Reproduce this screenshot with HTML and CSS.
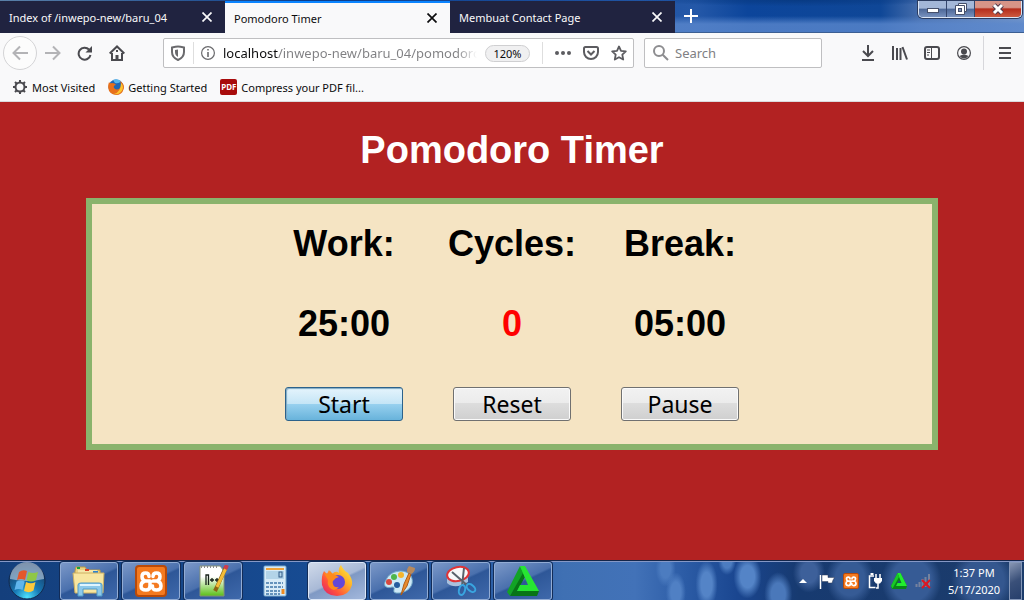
FILE: index.html
```html
<!DOCTYPE html>
<html lang="en">

<head>
    <meta charset="UTF-8">
    <meta name="viewport" content="width=device-width, initial-scale=1.0">
    <title>Pomodoro Timer</title>
    <link rel="stylesheet" href="styles.css">
</head>

<body>
    <svg class="defs" aria-hidden="true">
        <symbol id="xampp" viewBox="0 0 32 32">
            <rect x="1" y="1" width="30" height="30" rx="3" fill="#f47a20" stroke="#b94a08" stroke-width="2"/>
            <path d="M15 16V21Q15 25 11 25Q6 25 6 21Q6 17 10 16Q7 15 7 11.500Q7 8 10.500 8Q14 8 14 11.500M18 11.500Q18 8 21.500 8Q25 8 25 11.500Q25 15 22 16Q26 17 26 21Q26 25 21.500 25Q17 25 17.500 21M10 16H15M18 16H22" fill="none" stroke="#fff" stroke-width="3.500" stroke-linecap="round" stroke-linejoin="round"/>
        </symbol>
        <symbol id="triangle" viewBox="0 0 32 32">
            <path d="M13 1L0 27L3 31L17 9Z" fill="#12a325"/>
            <path d="M3 31H30L32 26H10L18 12L16 8Z" fill="#087416"/>
            <path d="M13 1H18L32 26H10L13 20H21Z" fill="#27e532"/>
        </symbol>
        <symbol id="traytriangle" viewBox="0 0 16 16">
            <path d="M6.500 0H9.500L16 13L15 16H1L0 13Z" fill="#0a8519"/>
            <path d="M6.500 0H9.500L16 13H5L6.500 10H10.500Z" fill="#22ee2e"/>
            <path d="M6.500 0L0 13L1.500 15.500L8 4Z" fill="#18ca27"/>
            <path d="M8 7L9.700 10H6.500Z" fill="#244a80"/>
        </symbol>
        <symbol id="close" viewBox="0 0 10 10">
            <path d="M.5.5L9.500 9.500M9.500.5L.5 9.500" fill="none" stroke="currentColor" stroke-width="1.700"/>
        </symbol>
    </svg>

    <header class="browser">
        <div class="tabs">
            <div class="tab">
                <a href="#">Index of /inwepo-new/baru_04</a>
                <button aria-label="Close tab"><svg width="10" height="10"><use href="#close"/></svg></button>
            </div>
            <div class="tab active">
                <a href="#">Pomodoro Timer</a>
                <button aria-label="Close tab"><svg width="10" height="10"><use href="#close"/></svg></button>
            </div>
            <div class="tab">
                <a href="#">Membuat Contact Page</a>
                <button aria-label="Close tab"><svg width="10" height="10"><use href="#close"/></svg></button>
            </div>
            <button class="newtab" aria-label="New tab">
                <svg width="14" height="14" viewBox="0 0 14 14"><path d="M7 0V14M0 7H14" stroke="#fff" stroke-width="2"/></svg>
            </button>
            <div class="winbtns">
                <button aria-label="Minimize"><svg width="12" height="12" viewBox="0 0 12 12"><rect x=".5" y="5.500" width="11" height="4" fill="#fff" stroke="#46506b"/></svg></button>
                <button aria-label="Restore"><svg width="12" height="12" viewBox="0 0 12 12"><path d="M3.500.5H11.500V8.500H3.500Z" fill="#fff" stroke="#46506b"/><path d="M.5 2.500H9.500V11.500H.5Z" fill="#fff" stroke="#46506b"/><rect x="3.500" y="5.500" width="3" height="3" fill="#7f93bb" stroke="#46506b"/></svg></button>
                <button class="winclose" aria-label="Close"><svg width="12" height="12" viewBox="0 0 12 12"><path d="M2 2L10 10M10 2L2 10" stroke="#50394a" stroke-width="5"/><path d="M2 2L10 10M10 2L2 10" stroke="#fff" stroke-width="3"/></svg></button>
            </div>
        </div>

        <div class="toolbar">
            <button class="icon back" aria-label="Back"><svg width="16" height="16" viewBox="0 0 16 16"><path d="M16 8H1M8 1.500L1.500 8L8 14.500"/></svg></button>
            <button class="icon forward" aria-label="Forward"><svg width="16" height="16" viewBox="0 0 16 16"><path d="M0 8H15M8 1.500L14.500 8L8 14.500"/></svg></button>
            <button class="icon" aria-label="Reload"><svg width="16" height="16" viewBox="0 0 16 16"><path d="M12 4.500A6 6 0 1 0 13.500 10"/><path d="M15 1V7.500H8.500Z" fill="#4a4a4f" stroke="none"/></svg></button>
            <button class="icon" aria-label="Home"><svg width="16" height="16" viewBox="0 0 16 16"><path d="M.7 8.500L8 1.500L15.300 8.500M3 8V15H13V8"/><path d="M6.500 15V10H9.500V15Z" fill="#4a4a4f" stroke="none"/><path d="M8 5V7"/></svg></button>

            <div class="urlbar">
                <svg class="shield" width="14" height="16" viewBox="0 0 14 16"><path d="M7 1.500C9 1.500 11 2 13 2.500V7C13 11 10.500 13.500 7 15C3.500 13.500 1 11 1 7V2.500C3 2 5 1.500 7 1.500Z" fill="none" stroke="#6a6a6d" stroke-width="2"/><path d="M7 4.500V12C5 11 4 9 4 7V5Z" fill="#6a6a6d"/></svg>
                <i class="sep"></i>
                <svg class="info" width="14" height="14" viewBox="0 0 14 14"><circle cx="7" cy="7" r="6.400" fill="none" stroke="#6a6a6d" stroke-width="1.200"/><path d="M7 6V11M7 3V4.600" stroke="#6a6a6d" stroke-width="1.600"/></svg>
                <input class="address" type="text" aria-label="Address" value="localhost/inwepo-new/baru_04/pomodoro">
                <button class="zoom">120%</button>
                <i class="sep"></i>
                <button aria-label="Page actions"><svg width="16" height="4" viewBox="0 0 16 4"><g fill="#5c5c60"><circle cx="2" cy="2" r="2"/><circle cx="8" cy="2" r="2"/><circle cx="14" cy="2" r="2"/></g></svg></button>
                <button aria-label="Save to Pocket"><svg width="16" height="14" viewBox="0 0 16 14"><path d="M2.500 1H13.500Q15 1 15 2.500V6A7 7 0 0 1 1 6V2.500Q1 1 2.500 1Z" fill="none" stroke="#5c5c60" stroke-width="2"/><path d="M4.500 5L8 8.500L11.500 5" fill="none" stroke="#5c5c60" stroke-width="2"/></svg></button>
                <button aria-label="Bookmark this page"><svg width="16" height="16" viewBox="0 0 16 16"><path d="M8 1.500L10 5.800L14.800 6.400L11.300 9.700L12.200 14.500L8 12.200L3.800 14.500L4.700 9.700L1.200 6.400L6 5.800Z" fill="none" stroke="#5c5c60" stroke-width="1.800" stroke-linejoin="round"/></svg></button>
            </div>

            <div class="searchbar">
                <svg width="16" height="16" viewBox="0 0 16 16"><circle cx="6" cy="6" r="5" fill="none" stroke="#8d8d90" stroke-width="2"/><path d="M9.700 9.700L15 15" stroke="#8d8d90" stroke-width="2"/></svg>
                <input type="text" placeholder="Search" aria-label="Search">
            </div>

            <div class="tools">
                <button class="icon" aria-label="Downloads"><svg width="14" height="16" viewBox="0 0 14 16"><path d="M7 0V11M2 6L7 11L12 6M1 15H13"/></svg></button>
                <button class="icon" aria-label="Library"><svg width="16" height="16" viewBox="0 0 16 16"><path d="M1 1V15M5 3V15M8.500 3V15M10.500 2L15 14.500"/></svg></button>
                <button class="icon" aria-label="Sidebars"><svg width="16" height="14" viewBox="0 0 16 14"><rect x="1" y="1" width="14" height="12" rx="2"/><path d="M7.500 1V13" stroke-width="1"/><path d="M3 4H6M3 6.500H6M3 9H5" stroke-width="1"/></svg></button>
                <button class="icon" aria-label="Account"><svg width="14" height="14" viewBox="0 0 14 14"><circle cx="7" cy="7" r="6.400" stroke-width="1.200"/><circle cx="7" cy="5.500" r="3" fill="#4a4a4f" stroke="none"/><path d="M2.500 10Q7 7 11.500 10Q7 15 2.500 10Z" fill="#4a4a4f" stroke="none"/></svg></button>
            </div>
            <button class="icon menu" aria-label="Menu"><svg width="12" height="12" viewBox="0 0 12 12"><path d="M0 1H12M0 6H12M0 11H12"/></svg></button>
        </div>

        <nav class="bookmarks">
            <a href="#">
                <svg width="16" height="16" viewBox="0 0 16 16"><circle cx="8" cy="8" r="4.500" fill="none" stroke="#4a4a4f" stroke-width="2"/><path d="M8 1V3.500M8 12.500V15M1 8H3.500M12.500 8H15M3 3L4.800 4.800M11.200 11.200L13 13M13 3L11.200 4.800M4.800 11.200L3 13" stroke="#4a4a4f" stroke-width="2"/></svg>
                Most Visited
            </a>
            <a href="#">
                <svg width="16" height="16" viewBox="0 0 16 16"><circle cx="8" cy="8" r="7.500" fill="#1e67b5"/><path d="M5 1Q9-1 13 2Q11 5 7 4Z" fill="#58b7ec"/><path d="M1 3Q2 5 4 4Q7 4 8 6Q5 6 6 9Q9 12 12 9Q14 6 12 2Q17 5 15.700 10Q14 16 8 16Q1 15 .2 9Q0 6 1 3Z" fill="#e8701a"/><path d="M13 4Q17 8 13 13Q10 16 6 15Q13 13 13 4Z" fill="#fcc52e"/></svg>
                Getting Started
            </a>
            <a href="#">
                <span class="pdf">PDF</span>
                Compress your PDF fil...
            </a>
        </nav>
    </header>

    <main class="page">
        <h1>Pomodoro Timer</h1>
        <div class="box">
            <div class="timer">
                <div class="cell">Work:</div>
                <div class="cell">Cycles:</div>
                <div class="cell">Break:</div>
                <div class="cell">25:00</div>
                <div class="cell cycles">0</div>
                <div class="cell">05:00</div>
                <div class="cell"><button class="btn start">Start</button></div>
                <div class="cell"><button class="btn">Reset</button></div>
                <div class="cell"><button class="btn">Pause</button></div>
            </div>
        </div>
    </main>

    <footer class="taskbar">
        <button class="orb" aria-label="Start menu">
            <svg width="38" height="38" viewBox="0 0 38 38">
                <defs>
                    <radialGradient id="orbfill" cx=".5" cy=".95" r=".9"><stop offset="0" stop-color="#4fe3ff"/><stop offset=".4" stop-color="#1779b5"/><stop offset="1" stop-color="#18355f"/></radialGradient>
                </defs>
                <circle cx="19" cy="19" r="18" fill="url(#orbfill)" stroke="#12294d"/>
                <path d="M2 17A17 17 0 0 1 36 17Q19 21 2 17Z" fill="#c4d6e6" opacity=".6"/>
                <path d="M11 10Q15 7 19 9L17 18Q13 16 9 18Z" fill="#e4572b"/>
                <path d="M20.500 10Q25 12 30 10L28 18Q23 21 18.500 18Z" fill="#8fc747"/>
                <path d="M8.500 19.500Q13 17.500 16.700 19.500L14.500 28Q11 26 6.500 28Z" fill="#5fb5ed"/>
                <path d="M18 20Q23 22.500 27.500 20L25.500 28.500Q21 31.500 16 29Z" fill="#fcc93c"/>
            </svg>
        </button>
        <button class="task" aria-label="Explorer">
            <svg width="34" height="32" viewBox="0 0 34 32">
                <path d="M3 6L4 2H13L15 5H28L29 25H3Z" fill="#ead281" stroke="#b99a49"/>
                <path d="M6 5H25L28 10V26H6Z" fill="#f5e6a8"/>
                <path d="M5 3H8" stroke="#18a33a" stroke-width="2"/><path d="M13 5H17" stroke="#d84026" stroke-width="2"/><path d="M21 7H26" stroke="#2a83d2" stroke-width="2"/>
                <path d="M1 8H32L31 28H3Z" fill="#f7e5a0" stroke="#cdb062"/>
                <path d="M6 31V20Q6 18 9 18H27Q30 18 30 20V31H25V24H11V31Z" fill="#8dc9ea" stroke="#4e9ac9"/>
                <path d="M8 20H28" stroke="#dff5ff" stroke-width="2"/>
            </svg>
        </button>
        <button class="task" aria-label="XAMPP"><svg width="32" height="32"><use href="#xampp"/></svg></button>
        <button class="task" aria-label="Notepad++">
            <svg width="32" height="32" viewBox="0 0 32 32">
                <defs><linearGradient id="note" x2="0" y2="1"><stop offset=".35" stop-color="#fff"/><stop offset="1" stop-color="#5abf16"/></linearGradient></defs>
                <path d="M3 1H23L27 6V31H3Z" fill="url(#note)" stroke="#879277"/>
                <path d="M4 2H22" stroke="#8a8a8a" stroke-width="2" stroke-dasharray="1 2"/>
                <path d="M9 20V10H11.500V20M13 15H17M15 13V17M18 15H22M20 13V17" fill="none" stroke="#17211a" stroke-width="1.300"/>
                <path d="M29 2L20 22L18 26" stroke="#8c6514" stroke-width="4"/><path d="M29 3L20 22" stroke="#f4bd38" stroke-width="3"/><path d="M28 4L30 0" stroke="#ce3c4d" stroke-width="4"/>
            </svg>
        </button>
        <button class="task plain" aria-label="Calculator">
            <svg width="24" height="32" viewBox="0 0 24 32">
                <rect x="1" y="1" width="22" height="30" rx="1" fill="#d8ebf7" stroke="#79a9ce"/>
                <path d="M3 4H21" stroke="#f0a239" stroke-width="2"/><rect x="3" y="6" width="18" height="8" fill="#b3d4e8"/>
                <rect x="16" y="7" width="3" height="5" fill="none" stroke="#315b87"/>
                <path d="M3 18H20M3 22H20M3 26H17M3 29H17" stroke="#6593bc" stroke-width="2" stroke-dasharray="3 1"/><path d="M20 24V29" stroke="#ee8b21" stroke-width="3"/>
            </svg>
        </button>
        <button class="task current" aria-label="Firefox">
            <svg width="32" height="32" viewBox="0 0 32 32">
                <defs><linearGradient id="fox" x1="1" y1="0" x2="0" y2="1"><stop offset="0" stop-color="#fff44f"/><stop offset=".35" stop-color="#ffb327"/><stop offset=".7" stop-color="#ff4f3c"/><stop offset="1" stop-color="#d51b77"/></linearGradient></defs>
                <path d="M18 8Q17 3 20 0Q22 5 27 8Q32 14 31 20Q28 31 16 31Q4 31 1 20Q0 11 3 6L6 9L8 5L11 9Q15 5 18 8Z" fill="url(#fox)"/>
                <circle cx="17" cy="17" r="7" fill="#6547d8"/>
                <path d="M3 8L8 9L9 6L12 9L18 12Q14 13 13 15Q11 16 12 19Q13 23 18 22Q13 28 8 22Q6 19 7 15Z" fill="#ff8a1c"/>
            </svg>
        </button>
        <button class="task" aria-label="Paint">
            <svg width="34" height="32" viewBox="0 0 34 32">
                <path d="M4 15C8 5 24 3 29 11C34 21 24 29 14 28C9 27 15 22 10 22C5 24 0 21 4 15Z" fill="#cce8f6" stroke="#72a8c7"/>
                <circle cx="7" cy="17" r="3" fill="#d8493e"/><circle cx="12" cy="12" r="3" fill="#4eb64b"/><circle cx="19" cy="10" r="3" fill="#f4b52d"/><circle cx="15" cy="20" r="3" fill="#245b9e"/>
                <path d="M19 30L22 19L27 8L29 9L25 21Z" fill="#e88b2c" stroke="#af5c17"/><path d="M25 7Q25 3 27 1L33 3Q33 7 29 9Z" fill="#b8895c"/>
            </svg>
        </button>
        <button class="task" aria-label="Snipping Tool">
            <svg width="34" height="32" viewBox="0 0 34 32">
                <path d="M3 10V18Q11 25 24 17V9Z" fill="#a9c1dd"/>
                <ellipse cx="14" cy="9" rx="11" ry="7" fill="#f7f8fa" stroke="#df3437" stroke-width="2" transform="rotate(-12 14 9)"/>
                <path d="M8 7L24 21M20 3L18 21" stroke="#59626c" stroke-width="2"/>
                <ellipse cx="18" cy="25" rx="3" ry="5" fill="none" stroke="#39a5e0" stroke-width="2" transform="rotate(15 18 25)"/><ellipse cx="27" cy="23" rx="5" ry="3" fill="none" stroke="#39a5e0" stroke-width="2" transform="rotate(40 27 23)"/>
            </svg>
        </button>
        <button class="task" aria-label="Triangle"><svg width="32" height="32"><use href="#triangle"/></svg></button>

        <div class="tray">
            <button aria-label="Show hidden icons"><svg width="8" height="4" viewBox="0 0 8 4"><path d="M0 4L4 0L8 4Z" fill="#fff"/></svg></button>
            <button aria-label="Action Center"><svg width="16" height="16" viewBox="0 0 16 16"><path d="M1.500 2V16" stroke="#fff" stroke-width="1.500"/><path d="M3 2H9V4.500H15.500L14 7L13 10H9V8.500H3Z" fill="#fff" stroke="#333e58" stroke-width=".5"/></svg></button>
            <button aria-label="XAMPP"><svg width="16" height="16"><use href="#xampp"/></svg></button>
            <button aria-label="Power"><svg width="16" height="16" viewBox="0 0 16 16"><path d="M7 3H2.500V14.500H8.500" fill="none" stroke="#fff" stroke-width="1.500"/><path d="M3.500 1H6.500" stroke="#fff" stroke-width="2"/><path d="M9 1V5M13 1V5M11 10V15H9" fill="none" stroke="#fff" stroke-width="1.500"/><path d="M7 5H15V8L13 10.500H9L7 8Z" fill="#fff"/></svg></button>
            <button aria-label="Triangle"><svg width="16" height="16"><use href="#traytriangle"/></svg></button>
            <button aria-label="Network"><svg width="16" height="16" viewBox="0 0 16 16"><path d="M1.500 11V14M4.500 9V14M7.500 6V14M10.500 4V14M14 1V14" stroke="#76839e" stroke-width="2"/><path d="M7 7L15 15M15 7L7 15" stroke="#e11520" stroke-width="2"/></svg></button>
        </div>
        <div class="clock">
            <span>1:37 PM</span>
            <span>5/17/2020</span>
        </div>
        <button class="desktop" aria-label="Show desktop"></button>
    </footer>
</body>

</html>
```

FILE: styles.css
```css
* {
    margin: 0;
    padding: 0;
    box-sizing: border-box;
}

body {
    display: flex;
    flex-direction: column;
    min-height: 100vh;
    font: 11px "Noto Sans", "Open Sans", sans-serif;
    color: #0c0c0d;
}

a {
    color: inherit;
    text-decoration: none;
}

button {
    display: flex;
    align-items: center;
    justify-content: center;
    border: none;
    background: none;
    font: inherit;
    color: inherit;
}

input {
    min-width: 0;
    border: none;
    outline: none;
    background: none;
    font: inherit;
}

svg {
    display: block;
    flex: none;
}

.defs {
    position: absolute;
    width: 0;
    height: 0;
}

/* tabs */
.tabs {
    display: flex;
    height: 33px;
    padding-top: 1px;
    background:
        linear-gradient(to bottom, rgba(90, 135, 205, 0) 50%, rgba(90, 135, 205, .8) 75%),
        radial-gradient(ellipse at 78% 0, #083a83 0, rgba(8, 58, 131, 0) 14%),
        linear-gradient(to right, #5a80a8, #0b3d8a 30%, #2458a8 68%, #0c459b 73%, #0f4797 86%, #4a70ad 90%, #7898c8);
    border-bottom: 1px solid #3c5f93;
}

.tab {
    display: flex;
    flex: 0 1 225px;
    align-items: center;
    justify-content: space-between;
    height: 32px;
    padding: 0 13px 0 9px;
    background: #202340;
    color: #f9f9fa;
    white-space: nowrap;
}

.tab.active {
    border-top: 2px solid #0a84ff;
    background: #f9f9fa;
    color: #0c0c0d;
}

.newtab {
    width: 32px;
    height: 30px;
}

.winbtns {
    display: flex;
    height: 17px;
    margin-left: auto;
    margin-right: 2px;
    border: 1px solid #dce6f5;
    border-top: none;
    border-radius: 0 0 5px 5px;
    box-shadow: 0 0 0 1px #2b3c60;
    overflow: hidden;
}

.winbtns button {
    width: 28px;
    border-right: 1px solid #34466d;
    background: linear-gradient(#a3b7d8 45%, #4c6797 50%, #7892bf);
}

.winbtns .winclose {
    width: 46px;
    border-right: none;
    background: linear-gradient(#d79487 40%, #b52d1c 50%, #cc5a40);
}

/* toolbar */
.toolbar {
    display: flex;
    align-items: center;
    height: 40px;
    padding: 0 3px;
    background: #f9f9fa;
}

.icon {
    width: 32px;
    height: 34px;
    fill: none;
    stroke: #4a4a4f;
    stroke-width: 2;
}

.back {
    width: 34px;
    border: 1px solid #d4d4d6;
    border-radius: 50%;
    background: #fcfcfc;
}

.back,
.forward {
    stroke: #b3b3b6;
}

.urlbar,
.searchbar {
    display: flex;
    align-items: center;
    height: 30px;
    border: 1px solid #bfbfc1;
    border-radius: 2px;
    background: #fff;
    font-size: 13px;
}

.urlbar {
    flex: 1;
    margin-left: 30px;
    padding-left: 7px;
}

.sep {
    width: 1px;
    height: 22px;
    background: #dedede;
}

.shield,
.info {
    margin-right: 8px;
}

.info {
    margin-left: 7px;
}

.address {
    flex: 1;
    height: 28px;
    background: linear-gradient(to right, #0c0c0d 55px, #7f7f82 55px, #7f7f82 calc(100% - 24px), transparent calc(100% - 4px));
    -webkit-background-clip: text;
    background-clip: text;
    color: transparent;
}

.urlbar button {
    width: 28px;
    height: 28px;
}

.urlbar .sep + button {
    margin-left: 6px;
}

.urlbar .zoom {
    width: 45px;
    height: 17px;
    margin: 0 12px 0 4px;
    border: 1px solid #cfcfd1;
    border-radius: 9px;
    background: #f0f0f1;
    font-size: 11px;
}

.searchbar {
    width: 178px;
    margin-left: 10px;
    padding: 0 8px;
    gap: 6px;
}

.searchbar input {
    flex: 1;
}

.searchbar input::placeholder {
    color: #808083;
}

.tools {
    display: flex;
    margin-left: 30px;
    padding-right: 3px;
    border-right: 1px solid #d7d7db;
}

.menu {
    margin-left: 5px;
}

.bookmarks {
    display: flex;
    align-items: center;
    gap: 13px;
    height: 29px;
    padding: 0 12px;
    border-bottom: 1px solid #dadadc;
    background: #f9f9fa;
}

.bookmarks a {
    display: flex;
    align-items: center;
    gap: 4px;
}

.pdf {
    width: 17px;
    height: 16px;
    border-radius: 2px;
    background: #a80c0c;
    color: #fff;
    font-size: 8px;
    font-weight: bold;
    line-height: 16px;
    text-align: center;
}

/* timer page */
.page {
    flex: 1;
    background: #b22222;
    font-family: "Liberation Sans", Arial, sans-serif;
}

.page h1 {
    color: #fff;
    font-size: 38px;
    line-height: 96px;
    text-align: center;
}

.box {
    margin: 0 86px;
    border: 6px solid #8ab36c;
    background: #f5e4c3;
}

.timer {
    display: grid;
    grid-template-columns: repeat(3, 1fr);
    width: 60%;
    margin: 0 auto;
}

.cell {
    display: flex;
    align-items: center;
    justify-content: center;
    height: 80px;
    color: #000;
    font-size: 36px;
    font-weight: bold;
}

.cycles {
    color: #f00;
}

.btn {
    width: 70%;
    height: 34px;
    border: 1px solid #707070;
    border-radius: 3px;
    background: linear-gradient(#f2f2f2, #ebebeb 48%, #dddddd 48%, #cfcfcf);
    box-shadow: inset 0 0 0 1px #fafafa;
    color: #000;
    font: 23px "Noto Sans", Tahoma, sans-serif;
}

.btn.start {
    border-color: #2c628b;
    background: linear-gradient(#e5f4fc, #c4e5f6 50%, #98d1ef 50%, #68b3db);
    box-shadow: inset 1px 1px 1px #7fa9c2;
}

/* taskbar */
.taskbar {
    display: flex;
    align-items: center;
    gap: 4px;
    height: 40px;
    padding-right: 2px;
    border-top: 1px solid #14264a;
    box-shadow: inset 0 1px #8598c6;
    background:
        radial-gradient(ellipse 14px 22px at 73% 40%, #5484c7 50%, transparent),
        radial-gradient(ellipse 11px 24px at 69% 60%, #5484c7 50%, transparent),
        radial-gradient(ellipse 10px 20px at 66% 80%, #5080c4 50%, transparent),
        radial-gradient(ellipse 10px 18px at 65% 20%, #4c7cc0 50%, transparent),
        radial-gradient(ellipse 9px 14px at 71% 0, #4c7cc0 50%, transparent),
        radial-gradient(ellipse 14px 22px at 76% 85%, #4a78ba 50%, transparent),
        radial-gradient(ellipse 16px 20px at 79% 30%, #3d609a 50%, transparent),
        radial-gradient(ellipse 24px 28px at 83% 45%, #365b95 60%, transparent),
        radial-gradient(ellipse 30px 32px at 89% 50%, #365b95 65%, transparent),
        radial-gradient(ellipse 32px 32px at 96% 50%, #34578f 65%, transparent),
        linear-gradient(to right, #143f7c, #174b92 30%, #2f62aa 50%, #3f70b3 55%, #4272b8 62%, #2b5ba5 67%, #1a4690 72%, #173a70 78%, #1c3c6b);
}

.orb {
    width: 54px;
    margin-right: 2px;
}

.task {
    width: 58px;
    height: 38px;
    border: 1px solid #92acd4;
    border-radius: 3px;
    background: linear-gradient(155deg, #7b98c8, #4a70ad 48%, #2e5798 52%, #3f69ab);
    box-shadow: 0 0 0 1px #122c58;
}

.task.plain {
    border-color: transparent;
    background: none;
    box-shadow: none;
}

.task.current {
    border-color: #dce7f7;
    background: linear-gradient(155deg, #d0daea, #a8b9d6 48%, #7f99c4 52%, #a3b8dc);
}

.tray {
    display: flex;
    margin-left: auto;
    margin-right: 4px;
}

.tray button {
    width: 24px;
    height: 36px;
}

.clock {
    display: flex;
    flex-direction: column;
    align-items: center;
    width: 62px;
    color: #fff;
    line-height: 17px;
}

.desktop {
    width: 13px;
    height: 38px;
    border: 1px solid #8497b8;
    background: linear-gradient(150deg, #8796b3, #3a5079 50%, #263f6c);
}
```
